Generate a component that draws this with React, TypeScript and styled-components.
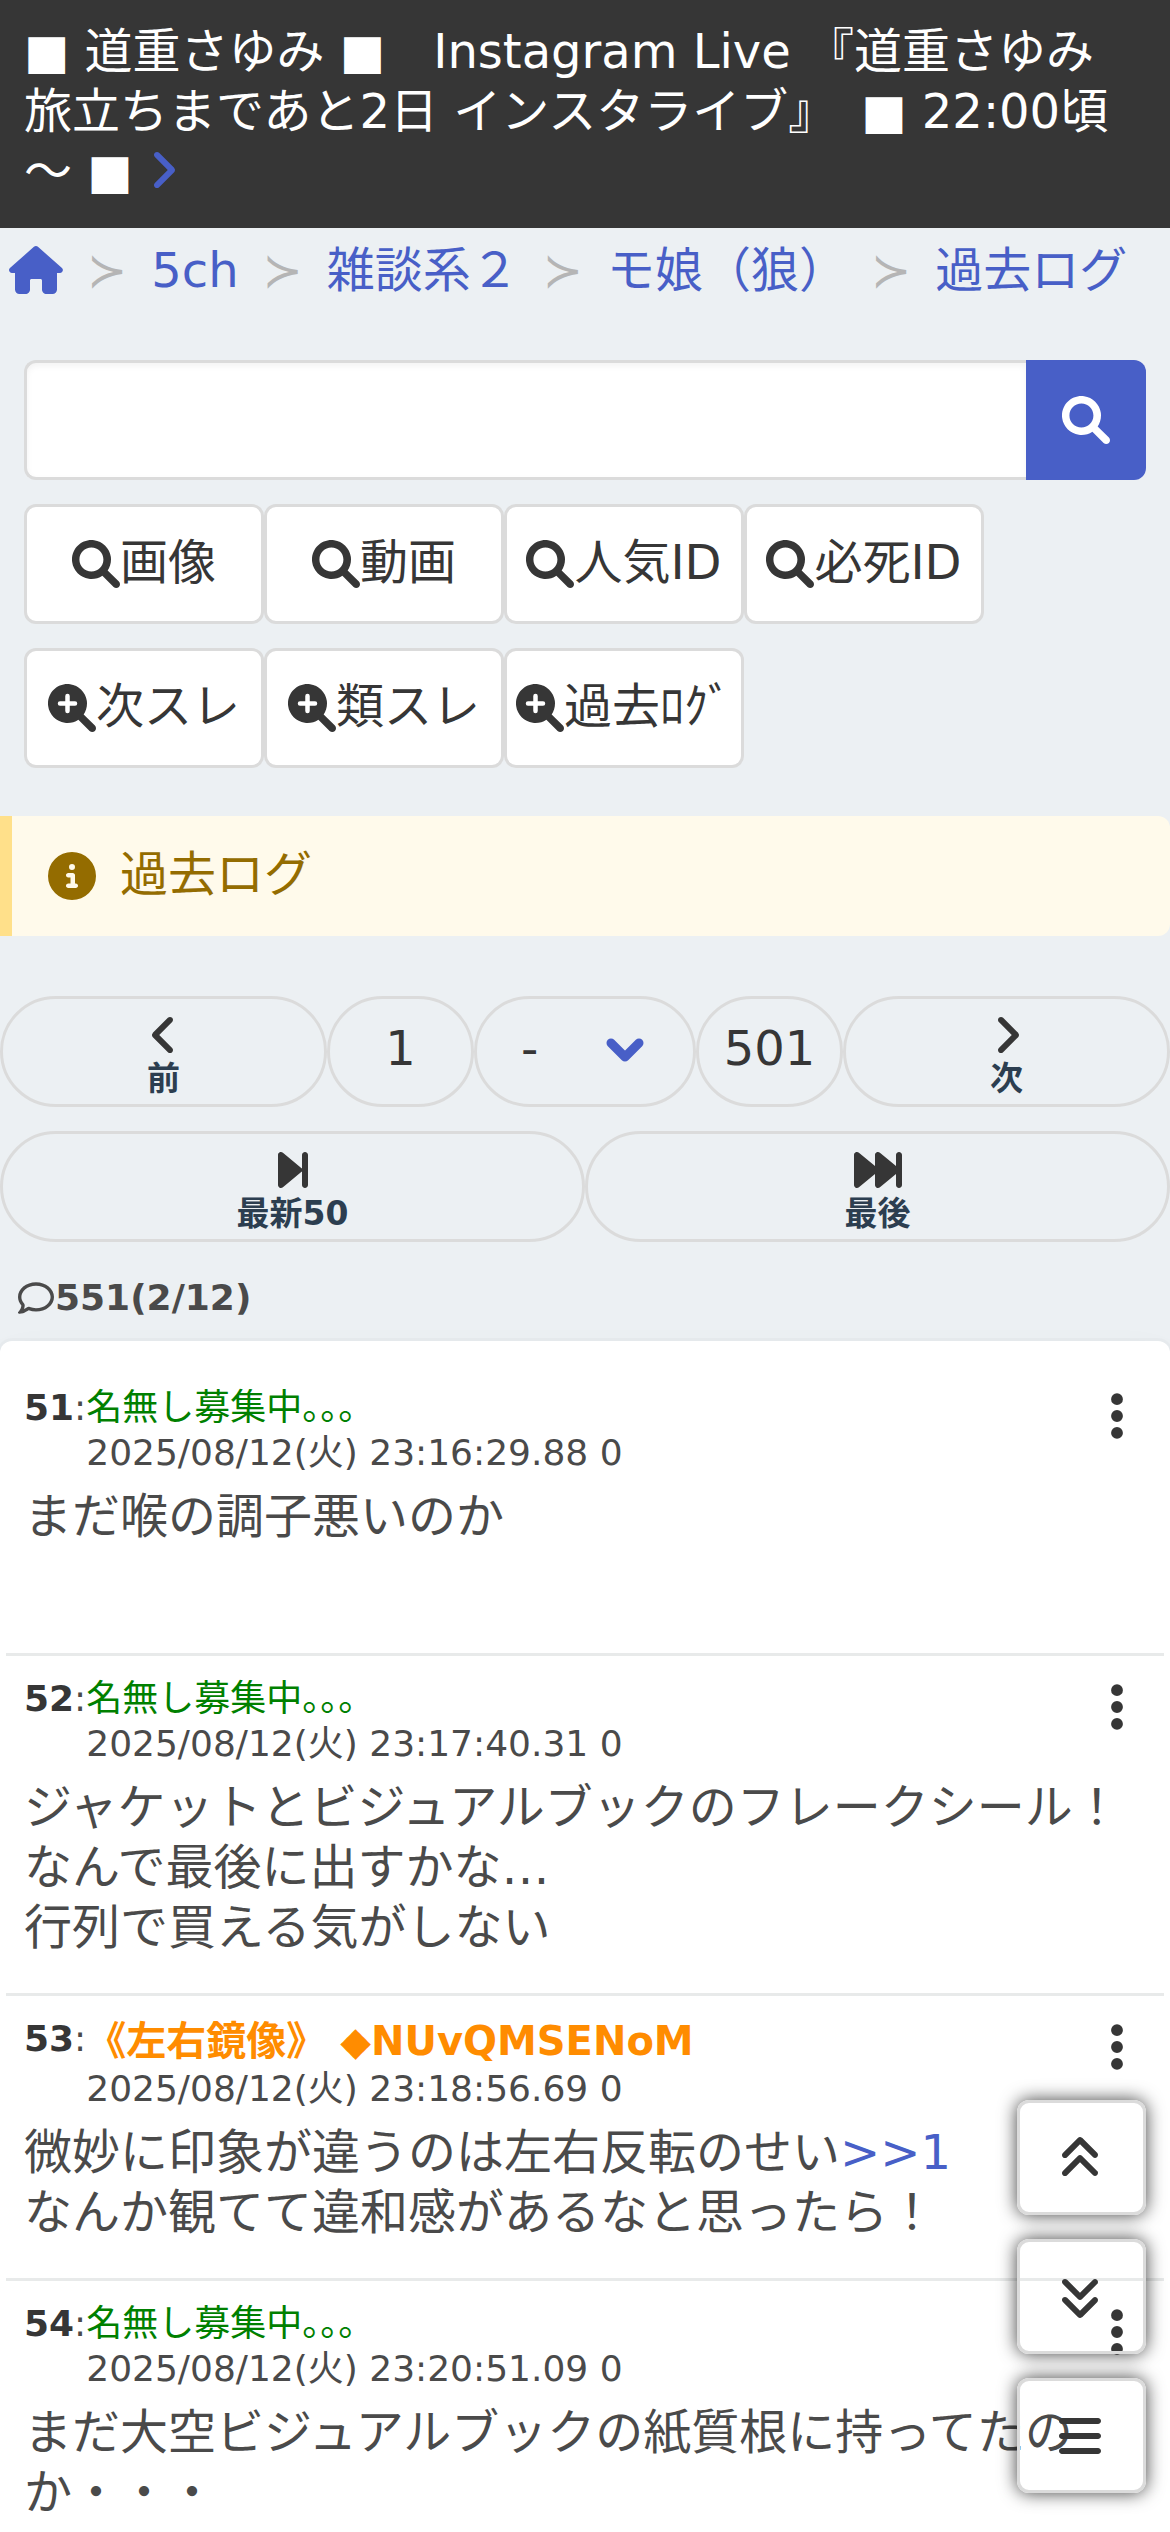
import React from "react";
import styled, { createGlobalStyle, css } from "styled-components";
import {
  FaAngleLeft,
  FaAngleRight,
  FaAnglesDown,
  FaAnglesUp,
  FaBars,
  FaCircleInfo,
  FaEllipsisVertical,
  FaForwardFast,
  FaForwardStep,
  FaRegComment,
} from "react-icons/fa6";

const colors = {
  page: "#ecf0f3",
  dark: "#363636",
  text: "#4a4a4a",
  link: "#485fc7",
  line: "#dbdbdb",
  white: "#ffffff",
};

const GlobalStyle = createGlobalStyle`
  *, *::before, *::after { box-sizing: border-box; }
  html, body { margin: 0; overflow-x: hidden; }
  body {
    background: ${colors.page};
    color: ${colors.text};
    font-family: "DejaVu Sans", "Noto Sans CJK JP", sans-serif;
    font-size: 48px;
    line-height: 60px;
  }
  button, input, select { font: inherit; color: inherit; margin: 0; }
  a { color: ${colors.link}; text-decoration: none; }
  svg { display: block; flex: none; }
`;

const Page = styled.div`
  height: 100vh;
  overflow: hidden;
`;

const Announcement = styled.header`
  padding: 21px 24px 27px;
  background: ${colors.dark};
  color: ${colors.white};

  svg {
    display: inline-block;
    width: 30px;
    vertical-align: -6px;
  }
`;

const Breadcrumb = styled.nav`
  padding: 12px 9px 0;
`;

const Crumbs = styled.ol`
  display: flex;
  align-items: center;
  margin: 0;
  padding: 0;
  list-style: none;
  white-space: nowrap;
`;

const Crumb = styled.li`
  display: flex;
  align-items: center;

  & + &::before {
    content: "\\227B";
    color: #b5b5b5;
    margin: 0 24px;
  }
`;

const SearchPanel = styled.section`
  display: grid;
  gap: 24px;
  padding: 60px 24px 48px;
`;

const SearchForm = styled.form`
  display: flex;
`;

const SearchInput = styled.input`
  flex: 1;
  min-width: 0;
  height: 120px;
  padding: 0 30px;
  border: 3px solid ${colors.line};
  border-right: 0;
  border-radius: 12px 0 0 12px;
  background: ${colors.white};
  box-shadow: inset 0 3px 6px rgba(10, 10, 10, 0.05);
`;

const SearchButton = styled.button`
  display: grid;
  place-items: center;
  width: 120px;
  border: 0;
  border-radius: 0 12px 12px 0;
  background: ${colors.link};
  color: ${colors.white};
`;

const ButtonRow = styled.div`
  display: flex;
`;

const FilterButton = styled.button`
  display: flex;
  align-items: center;
  justify-content: center;
  width: 240px;
  height: 120px;
  padding: 0;
  border: 3px solid ${colors.line};
  border-radius: 12px;
  background: ${colors.white};
  color: ${colors.dark};
  white-space: nowrap;
`;

const IconLabel = styled.span`
  padding-bottom: 4px;
`;

const Notice = styled.p`
  display: flex;
  align-items: center;
  gap: 24px;
  margin: 0;
  padding: 28px 36px;
  border-left: 12px solid #ffe08a;
  border-radius: 0 12px 12px 0;
  background: #fffaeb;
  color: #946c00;
`;

const Pager = styled.nav`
  display: grid;
  gap: 24px;
  padding-top: 60px;
`;

const PagerRow = styled.div`
  display: flex;
`;

const pill = css`
  height: 111px;
  border: 3px solid ${colors.line};
  border-radius: 56px;
  color: ${colors.dark};
`;

const PagerStep = styled.a`
  ${pill}
  flex: 1;
  display: flex;
  flex-direction: column;
  align-items: center;
  padding-top: 12px;
`;

const StepLabel = styled.span`
  color: #2c3e50;
  font-size: 33px;
  font-weight: 700;
  line-height: 40px;
`;

const PagerNumber = styled.a`
  ${pill}
  display: grid;
  place-items: center;
  width: 147px;
  padding-bottom: 8px;
`;

const SelectWrap = styled.div`
  position: relative;
  width: 222px;

  svg {
    position: absolute;
    right: 52px;
    top: 40px;
    pointer-events: none;
  }
`;

const PageSelect = styled.select`
  ${pill}
  width: 100%;
  padding: 0 44px 8px;
  background: transparent;
  appearance: none;
`;

const Count = styled.p`
  display: flex;
  align-items: center;
  gap: 1px;
  margin: 0;
  padding: 33px 18px 21px;
  font-size: 36px;
  font-weight: 700;
  line-height: 45px;
`;

const Thread = styled.main`
  padding: 24px 6px;
  border-radius: 12px;
  background: ${colors.white};
  box-shadow: 0 24px 48px -6px rgba(10, 10, 10, 0.1), 0 0 0 3px rgba(10, 10, 10, 0.02);
`;

const PostItem = styled.article`
  position: relative;
  min-height: 288px;
  padding: 20px 18px 36px;

  & + & {
    min-height: 0;
    border-top: 3px solid #e8eaea;
  }
`;

const PostMeta = styled.header`
  display: grid;
  grid-template-columns: max-content 1fr;
  margin-bottom: 11px;
  font-size: 36px;
  line-height: 45px;
`;

const PostNumber = styled.b`
  color: ${colors.dark};
`;

const PosterName = styled.span<{ $trip?: boolean }>`
  color: ${(p) => (p.$trip ? "#ff8c00" : "#008000")};
  ${(p) =>
    p.$trip &&
    css`
      font-size: 40px;
      font-weight: 700;
      line-height: 50px;
    `}
`;

const PostDate = styled.time`
  grid-column: 2;
`;

const PostBody = styled.p`
  margin: 0;
`;

const PostMenu = styled.button`
  position: absolute;
  top: 24px;
  right: 20px;
  display: grid;
  place-items: center;
  padding: 0;
  border: 0;
  background: transparent;
  color: ${colors.dark};
`;

const FloatingTools = styled.aside`
  position: fixed;
  right: 24px;
  bottom: 39px;
  display: grid;
  gap: 24px;
`;

const FloatingButton = styled.button`
  display: grid;
  place-items: center;
  width: 129px;
  height: 115px;
  padding: 0 3px 0 0;
  border: 3px solid ${colors.line};
  border-radius: 12px;
  background: transparent;
  box-shadow: 0 0 18px rgba(0, 0, 0, 0.75);
  color: ${colors.dark};
`;

function HomeIcon() {
  return (
    <svg width="54" height="48" viewBox="0 0 576 512" fill="currentColor" aria-hidden="true">
      <path d="M64 288H32c-28 0-43-35-22-54L266 9c12-11 31-11 43 0l256 225c21 19 6 54-22 54h-31v176c0 26-21 48-48 48h-64c-26 0-48-22-48-48v-96c0-9-7-16-16-16h-96c-9 0-16 7-16 16v96c0 26-22 48-48 48h-64c-27 0-48-22-48-48z" />
    </svg>
  );
}

function SearchIcon() {
  return (
    <svg width="48" height="48" viewBox="0 0 512 512" fill="currentColor" aria-hidden="true">
      <path d="M500.3 443.7l-119.7-119.7c27.22-40.41 40.65-90.9 33.46-144.7C401.8 87.79 326.8 13.32 235.3 1.723C99.01-15.51-15.51 99.01 1.724 235.3c11.6 91.49 86.08 166.5 177.6 178.7c53.8 7.189 104.3-6.236 144.7-33.46l119.7 119.7c15.62 15.62 40.95 15.62 56.57 0C515.9 484.7 515.9 459.3 500.3 443.7zM79.1 208c0-70.58 57.42-128 128-128s128 57.42 128 128c0 70.58-57.42 128-128 128S79.1 278.6 79.1 208z" />
    </svg>
  );
}

function SolidZoomIcon() {
  return (
    <svg width="48" height="48" viewBox="0 0 512 512" aria-hidden="true">
      <path
        fill="currentColor"
        d="M500.3 443.7l-119.7-119.7c27.22-40.41 40.65-90.9 33.46-144.7C401.8 87.79 326.8 13.32 235.3 1.723C99.01-15.51-15.51 99.01 1.724 235.3c11.6 91.49 86.08 166.5 177.6 178.7c53.8 7.189 104.3-6.236 144.7-33.46l119.7 119.7c15.62 15.62 40.95 15.62 56.57 0C515.9 484.7 515.9 459.3 500.3 443.7z"
      />
      <path stroke="#fff" strokeWidth="48" strokeLinecap="round" d="M208 128v160M128 208h160" />
    </svg>
  );
}

function DownIcon() {
  return (
    <svg width="38" height="30" viewBox="0 0 38 30" fill="none" aria-hidden="true">
      <path stroke={colors.link} strokeWidth="9" strokeLinecap="round" strokeLinejoin="round" d="M5 7l14 14L33 7" />
    </svg>
  );
}

const crumbs = ["5ch", "雑談系２", "モ娘（狼）", "過去ログ"];
const mediaFilters = ["画像", "動画", "人気ID", "必死ID"];
const threadFilters = ["次スレ", "類スレ", "過去ﾛｸﾞ"];

type Post = {
  no: number;
  name: string;
  trip?: boolean;
  date: string;
  lines: React.ReactNode[];
};

const posts: Post[] = [
  { no: 51, name: "名無し募集中。。。", date: "2025/08/12(火) 23:16:29.88 0", lines: ["まだ喉の調子悪いのか"] },
  {
    no: 52,
    name: "名無し募集中。。。",
    date: "2025/08/12(火) 23:17:40.31 0",
    lines: ["ジャケットとビジュアルブックのフレークシール！", "なんで最後に出すかな…", "行列で買える気がしない"],
  },
  {
    no: 53,
    name: "《左右鏡像》 ◆NUvQMSENoM",
    trip: true,
    date: "2025/08/12(火) 23:18:56.69 0",
    lines: [
      <>
        微妙に印象が違うのは左右反転のせい<a href="#1">&gt;&gt;1</a>
      </>,
      "なんか観てて違和感があるなと思ったら！",
    ],
  },
  {
    no: 54,
    name: "名無し募集中。。。",
    date: "2025/08/12(火) 23:20:51.09 0",
    lines: ["まだ大空ビジュアルブックの紙質根に持ってたのか・・・"],
  },
];

function PostView({ post }: { post: Post }) {
  return (
    <PostItem id={String(post.no)}>
      <PostMeta>
        <span>
          <PostNumber>{post.no}</PostNumber>:
        </span>
        <PosterName $trip={post.trip}>{post.name}</PosterName>
        <PostDate>{post.date}</PostDate>
      </PostMeta>
      <PostBody>
        {post.lines.map((line, i) => (
          <React.Fragment key={i}>
            {i > 0 && <br />}
            {line}
          </React.Fragment>
        ))}
      </PostBody>
      <PostMenu type="button" aria-label="メニュー">
        <FaEllipsisVertical size={54} />
      </PostMenu>
    </PostItem>
  );
}

export default function App() {
  return (
    <Page>
      <GlobalStyle />
      <Announcement>
        ■ 道重さゆみ ■　Instagram Live 『道重さゆみ 旅立ちまであと2日 インスタライブ』&thinsp; ■ 22:00頃～ ■{" "}
        <a href="#live" aria-label="詳細">
          <FaAngleRight size={48} />
        </a>
      </Announcement>
      <Breadcrumb aria-label="パンくず">
        <Crumbs>
          <Crumb>
            <a href="#home" aria-label="ホーム">
              <HomeIcon />
            </a>
          </Crumb>
          {crumbs.map((c) => (
            <Crumb key={c}>
              <a href="#crumb">{c}</a>
            </Crumb>
          ))}
        </Crumbs>
      </Breadcrumb>
      <SearchPanel>
        <SearchForm onSubmit={(e) => e.preventDefault()}>
          <SearchInput type="text" aria-label="検索" />
          <SearchButton type="submit" aria-label="検索する">
            <SearchIcon />
          </SearchButton>
        </SearchForm>
        <ButtonRow>
          {mediaFilters.map((f) => (
            <FilterButton type="button" key={f}>
              <SearchIcon />
              <IconLabel>{f}</IconLabel>
            </FilterButton>
          ))}
        </ButtonRow>
        <ButtonRow>
          {threadFilters.map((f) => (
            <FilterButton type="button" key={f}>
              <SolidZoomIcon />
              <IconLabel>{f}</IconLabel>
            </FilterButton>
          ))}
        </ButtonRow>
      </SearchPanel>
      <Notice>
        <FaCircleInfo />
        <IconLabel>過去ログ</IconLabel>
      </Notice>
      <Pager aria-label="ページ">
        <PagerRow>
          <PagerStep href="#prev">
            <FaAngleLeft />
            <StepLabel>前</StepLabel>
          </PagerStep>
          <PagerNumber href="#p1">1</PagerNumber>
          <SelectWrap>
            <PageSelect aria-label="ページ選択" defaultValue="-">
              <option>-</option>
            </PageSelect>
            <DownIcon />
          </SelectWrap>
          <PagerNumber href="#p501">501</PagerNumber>
          <PagerStep href="#next">
            <FaAngleRight />
            <StepLabel>次</StepLabel>
          </PagerStep>
        </PagerRow>
        <PagerRow>
          <PagerStep href="#latest">
            <FaForwardStep />
            <StepLabel>最新50</StepLabel>
          </PagerStep>
          <PagerStep href="#last">
            <FaForwardFast />
            <StepLabel>最後</StepLabel>
          </PagerStep>
        </PagerRow>
      </Pager>
      <Count>
        <FaRegComment />
        551(2/12)
      </Count>
      <Thread>
        {posts.map((p) => (
          <PostView key={p.no} post={p} />
        ))}
      </Thread>
      <FloatingTools>
        <FloatingButton type="button" aria-label="先頭へ">
          <FaAnglesUp />
        </FloatingButton>
        <FloatingButton type="button" aria-label="末尾へ">
          <FaAnglesDown />
        </FloatingButton>
        <FloatingButton type="button" aria-label="メニューを開く">
          <FaBars />
        </FloatingButton>
      </FloatingTools>
    </Page>
  );
}
